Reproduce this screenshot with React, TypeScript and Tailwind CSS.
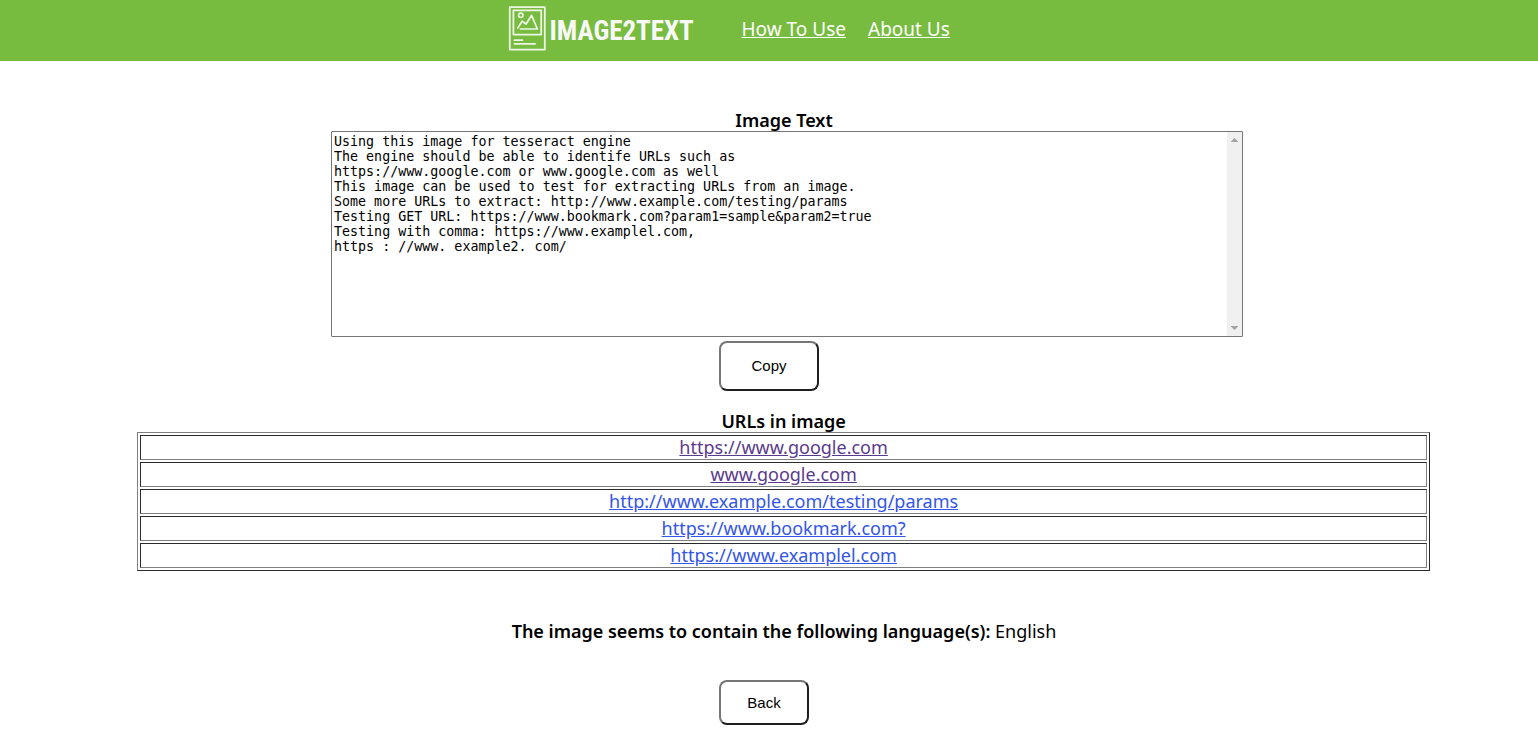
const imageText = `Using this image for tesseract engine
The engine should be able to identife URLs such as
https://www.google.com or www.google.com as well
This image can be used to test for extracting URLs from an image.
Some more URLs to extract: http://www.example.com/testing/params
Testing GET URL: https://www.bookmark.com?param1=sample&param2=true
Testing with comma: https://www.examplel.com,
https : //www. example2. com/`;

const urls = [
  { text: 'https://www.google.com', visited: true },
  { text: 'www.google.com', visited: true },
  { text: 'http://www.example.com/testing/params', visited: false },
  { text: 'https://www.bookmark.com?', visited: false },
  { text: 'https://www.examplel.com', visited: false },
];

const buttonClass =
  'block rounded-lg border-2 border-t-[#767676] border-l-[#767676] border-r-[#1f1f1f] border-b-[#1f1f1f] bg-white font-["Liberation_Sans",sans-serif] text-[15px] leading-[18px] text-black';

function Logo() {
  return (
    <a href="#" aria-label="Image2Text" className="flex items-center gap-1 text-[#f8f8f8]">
      <svg width="38" height="46" viewBox="0 0 38 46" fill="none" stroke="#edf5e6" strokeLinecap="round" strokeLinejoin="round" aria-hidden="true">
        <rect x="1.8" y="2.1" width="35" height="42.6" strokeWidth="1.8" />
        <rect x="5.4" y="5.4" width="27.8" height="24.2" strokeWidth="1.8" />
        <circle cx="12.8" cy="10.3" r="2.2" strokeWidth="1.6" />
        <path d="M9.7 23 14.2 16.2l3.9 2.8 5.5-8.7 5.8 13.7H12.5" strokeWidth="1.7" />
        <path d="M6.4 35.2h8M6.4 38.8h20.8" strokeWidth="1.7" />
      </svg>
      <span className="w-[142px] pt-[6px] font-['Roboto_Condensed',Roboto,sans-serif] text-[27px] leading-8 font-bold whitespace-nowrap">IMAGE2TEXT</span>
    </a>
  );
}

export default function App() {
  return (
    <div className="bg-white font-['Noto_Sans',sans-serif] text-[18px] leading-[21px] text-black">
      <header className="flex h-[61px] items-start bg-[#78bc3f] pt-[5px] pl-[33%]">
        <Logo />
        <nav className="ml-[50px] flex gap-[22px] pt-[14px] text-[19px] text-white">
          <a href="#how-to-use" className="underline">How To Use</a>
          <a href="#about-us" className="underline">About Us</a>
        </nav>
      </header>
      <main className="pt-[49px]">
        <section className="flex flex-col items-center pl-[30px]">
          <label htmlFor="image-text" className="font-semibold">Image Text</label>
          <div className="relative ml-[6px] w-[912px] max-w-full">
            <textarea
              id="image-text"
              rows={13}
              defaultValue={imageText}
              className="block h-[206px] w-full resize-none rounded-[1px] border border-[#767676] bg-white p-[2px] pr-[17px] font-['DejaVu_Sans_Mono',monospace] [font-size:revert] leading-[15px]"
            />
            <div aria-hidden="true" className="pointer-events-none absolute inset-y-px right-px flex w-[15px] flex-col items-center justify-between bg-[#f0f0f0] py-[6px]">
              <svg width="7" height="4" viewBox="0 0 7 4" fill="#a3a3a3"><path d="M3.5 0 7 3.5V4H0v-.5z" /></svg>
              <svg width="7" height="4" viewBox="0 0 7 4" fill="#a3a3a3"><path d="M3.5 4 7 .5V0H0v.5z" /></svg>
            </div>
          </div>
        </section>
        <button type="button" className={`${buttonClass} mt-1 ml-[46.75%] h-[50px] w-[100px]`}>Copy</button>
        <section className="mt-5 pr-[7%] pl-[8.9%]">
          <h2 id="urls-title" className="text-center font-semibold">URLs in image</h2>
          <table
            aria-labelledby="urls-title"
            className="w-full border-separate border-spacing-[2px] border border-t-[#808080] border-r-[#2b2b2b] border-b-[#2b2b2b] border-l-[#808080]"
          >
            <tbody>
              {urls.map((url) => (
                <tr key={url.text}>
                  <td className="border border-t-[#2b2b2b] border-r-[#808080] border-b-[#808080] border-l-[#2b2b2b] p-px text-center">
                    <a href="#" className={url.visited ? 'text-[#5b3a8e] underline' : 'text-[#3355e8] underline'}>{url.text}</a>
                  </td>
                </tr>
              ))}
            </tbody>
          </table>
        </section>
        <p className="mt-[50px] pl-[30px] text-center">
          <b className="font-semibold">The image seems to contain the following language(s):</b> English
        </p>
        <button type="button" className={`${buttonClass} mt-[38px] ml-[46.75%] h-[45px] w-[90px]`}>Back</button>
      </main>
    </div>
  );
}
